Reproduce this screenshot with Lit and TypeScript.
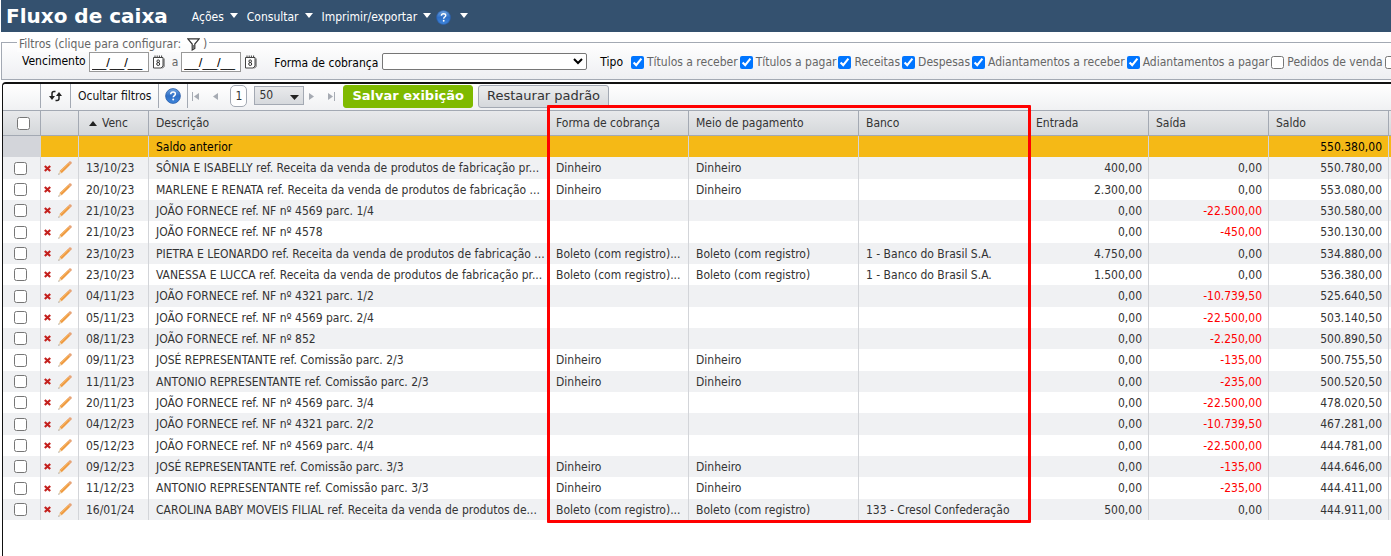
import { LitElement, html, css, svg } from "lit";
import { customElement } from "lit/decorators.js";
import { classMap } from "lit/directives/class-map.js";

interface Entry {
  date: string;
  text: string;
  method?: string;
  means?: string;
  bank?: string;
  credit: string;
  debit: string;
  balance: string;
}

const e = (
  date: string, text: string, credit: string, debit: string, balance: string,
  method = "", means = "", bank = ""
): Entry => ({ date, text, credit, debit, balance, method, means, bank });

const CASH = "Dinheiro";
const SLIP = "Boleto (com registro)";
const SLIP_CUT = "Boleto (com registro)...";

const ENTRIES: Entry[] = [
  e("13/10/23", "SÔNIA E ISABELLY ref. Receita da venda de produtos de fabricação pr...", "400,00", "0,00", "550.780,00", CASH, CASH),
  e("20/10/23", "MARLENE E RENATA ref. Receita da venda de produtos de fabricação ...", "2.300,00", "0,00", "553.080,00", CASH, CASH),
  e("21/10/23", "JOÃO FORNECE ref. NF nº 4569 parc. 1/4", "0,00", "-22.500,00", "530.580,00"),
  e("21/10/23", "JOÃO FORNECE ref. NF nº 4578", "0,00", "-450,00", "530.130,00"),
  e("23/10/23", "PIETRA E LEONARDO ref. Receita da venda de produtos de fabricação ...", "4.750,00", "0,00", "534.880,00", SLIP_CUT, SLIP, "1 - Banco do Brasil S.A."),
  e("23/10/23", "VANESSA E LUCCA ref. Receita da venda de produtos de fabricação pr...", "1.500,00", "0,00", "536.380,00", SLIP_CUT, SLIP, "1 - Banco do Brasil S.A."),
  e("04/11/23", "JOÃO FORNECE ref. NF nº 4321 parc. 1/2", "0,00", "-10.739,50", "525.640,50"),
  e("05/11/23", "JOÃO FORNECE ref. NF nº 4569 parc. 2/4", "0,00", "-22.500,00", "503.140,50"),
  e("08/11/23", "JOÃO FORNECE ref. NF nº 852", "0,00", "-2.250,00", "500.890,50"),
  e("09/11/23", "JOSÉ REPRESENTANTE ref. Comissão parc. 2/3", "0,00", "-135,00", "500.755,50", CASH, CASH),
  e("11/11/23", "ANTONIO REPRESENTANTE ref. Comissão parc. 2/3", "0,00", "-235,00", "500.520,50", CASH, CASH),
  e("20/11/23", "JOÃO FORNECE ref. NF nº 4569 parc. 3/4", "0,00", "-22.500,00", "478.020,50"),
  e("04/12/23", "JOÃO FORNECE ref. NF nº 4321 parc. 2/2", "0,00", "-10.739,50", "467.281,00"),
  e("05/12/23", "JOÃO FORNECE ref. NF nº 4569 parc. 4/4", "0,00", "-22.500,00", "444.781,00"),
  e("09/12/23", "JOSÉ REPRESENTANTE ref. Comissão parc. 3/3", "0,00", "-135,00", "444.646,00", CASH, CASH),
  e("11/12/23", "ANTONIO REPRESENTANTE ref. Comissão parc. 3/3", "0,00", "-235,00", "444.411,00", CASH, CASH),
  e("16/01/24", "CAROLINA BABY MOVEIS FILIAL ref. Receita da venda de produtos de...", "500,00", "0,00", "444.911,00", SLIP_CUT, SLIP, "133 - Cresol Confederação"),
];

const KINDS: [string, boolean][] = [
  ["Títulos a receber", true],
  ["Títulos a pagar", true],
  ["Receitas", true],
  ["Despesas", true],
  ["Adiantamentos a receber", true],
  ["Adiantamentos a pagar", true],
  ["Pedidos de venda", false],
];

const caret = html`<svg class="caret" width="8" height="5" viewBox="0 0 8 5"><path d="M0 0h8L4 5z" fill="#fff" /></svg>`;

const help = (size: number) => html`<svg width=${size} height=${size} viewBox="0 0 16 16">
  <defs>
    <linearGradient id="g" x1="0" y1="0" x2="0" y2="1">
      <stop offset="0" stop-color="#6fa3e0" /><stop offset=".5" stop-color="#2f6fc6" /><stop offset="1" stop-color="#3f86dc" />
    </linearGradient>
  </defs>
  <circle cx="8" cy="8" r="7.4" fill="url(#g)" stroke="#2a5da8" stroke-width=".8" />
  <path d="M5.7 6.2C5.8 4.7 6.8 4 8.1 4c1.4 0 2.3.8 2.3 1.9 0 1.6-2.2 1.7-2.2 3.4" fill="none" stroke="#fff" stroke-width="1.5" />
  <circle cx="8.2" cy="11.5" r="1" fill="#fff" />
</svg>`;

const calendar = html`<svg width="13" height="14" viewBox="0 0 13 14">
  <path d="M1.5 2.5h9.500v8.500l-2 2h-7.500z" fill="#fff" stroke="#444" />
  <path d="M12 3.500v8L10 13.500" fill="none" stroke="#444" />
  <path d="M3 .5v2M5.200.5v2M7.400.5v2M9.600.5v2" stroke="#444" />
  <circle cx="6.200" cy="6.200" r="1.300" fill="none" stroke="#333" /><circle cx="6.200" cy="9" r="1.500" fill="none" stroke="#333" />
</svg>`;

const remove = html`<svg width="7" height="7" viewBox="0 0 7 7"><path d="M.8 1l5.400 5M6.200 1L.8 6" stroke="#c4201d" stroke-width="2.200" /></svg>`;

const pencil = html`<svg width="14" height="14" viewBox="0 0 14 14">
  <path d="M1.600 10.100L10.200 1.700l2.100 2.100L3.700 12.300z" fill="#ee9a41" />
  <path d="M2.400 10.600L10.800 2.400" stroke="#f8b564" stroke-width="1" />
  <path d="M10.200 1.700L11.600.3q1-.3 1.700.4t.4 1.700L12.300 3.800z" fill="#e6a377" />
  <path d="M1.600 10.100L.4 13.500l3.300-1.200z" fill="#ecd3ae" /><path d="M.8 12.400L.4 13.600l1.200-.4z" fill="#444" />
</svg>`;

const COLUMNS = ["check", "tools", "date", "text", "method", "means", "bank", "money", "money", "money", "rest"];

@customElement("app-root")
export class AppRoot extends LitElement {
  static styles = css`
    :host {
      display: block;
      min-height: 100vh;
      background: #fff;
      color: #333;
      font: 12px/16px "DejaVu Sans Condensed", "Noto Sans", sans-serif;
      overflow: hidden;
    }
    * { box-sizing: border-box; }
    svg { display: block; flex: none; }
    button, input, select { font: inherit; color: inherit; margin: 0; }
    button { cursor: pointer; }
    .bar {
      display: flex;
      align-items: center;
      height: 32px;
      margin-left: 1px;
      padding-left: 5px;
      background: #34516f;
      color: #fff;
    }
    .title {
      margin: 0 24px 0 0;
      font: bold 20px/24px "DejaVu Sans", sans-serif;
    }
    .menu { display: flex; align-items: center; gap: 9px; padding-top: 2px; }
    .menu-item {
      display: flex;
      align-items: center;
      gap: 6px;
      padding: 0;
      border: 0;
      background: none;
    }
    .help { margin-left: -4px; }
    .caret { margin-bottom: 4px; }
    .filters {
      position: relative;
      display: flex;
      align-items: flex-start;
      height: 38px;
      margin: 10px 0 0 1px;
      padding: 9px 0 0 20px;
      border: 1px solid #a3a9b3;
      border-right: 0;
      background: linear-gradient(#fff, #eeeff2);
      color: #666;
      white-space: nowrap;
    }
    .legend {
      position: absolute;
      top: -7px;
      left: 15px;
      display: flex;
      align-items: center;
      padding: 0 2px;
      background: linear-gradient(#fff 50%, #fdfdfd 50%);
    }
    .funnel { margin: 0 3px 0 6px; padding: 0; border: 0; background: none; }
    .dates { display: flex; align-items: center; gap: 3px; }
    .name { color: #000; }
    .dates .name { padding-bottom: 2px; }
    .date-box {
      width: 60px;
      height: 20px;
      padding: 0 2px;
      border: 1px solid #999;
      background: #fff;
      color: #000;
      font: 13px/16px "Liberation Sans", sans-serif;
    }
    .plain { padding: 0; border: 0; background: none; }
    .to { margin: 0 0 0 4px; }
    .charge { display: flex; align-items: flex-start; gap: 4px; margin: 1px 13px 0 17px; }
    .charge .name { padding-top: 2px; }
    .charge select {
      width: 205px;
      height: 17px;
      border: 1px solid #767676;
      border-radius: 2px;
      background: #fff;
      color: #000;
    }
    .kinds { display: flex; align-items: center; margin-top: 2px; }
    .kinds .name { margin-right: 8px; }
    .kind { display: flex; align-items: center; gap: 3px; margin-right: 2px; }
    input[type="checkbox"] { width: 13px; height: 13px; flex: none; margin: 0; }
    .grid {
      position: relative;
      margin: 2px 0 0 2px;
      border: solid #111;
      border-width: 2px 0 0 1px;
      border-top-left-radius: 4px;
      min-height: calc(100vh - 82px);
    }
    .toolbar {
      display: flex;
      align-items: center;
      height: 26px;
      padding: 0 0 2px 37px;
      background: linear-gradient(#fff, #f0f1f3);
      border-top-left-radius: 3px;
      white-space: nowrap;
    }
    .tool {
      display: flex;
      align-items: center;
      height: 24px;
      padding: 0 7px;
      border: solid #a3a9b3;
      border-width: 0 0 0 1px;
      background: none;
      color: #111;
    }
    .tool-help { padding: 0 6px; }
    .pager {
      display: flex;
      align-items: center;
      gap: 11px;
      height: 24px;
      padding-left: 4px;
      border-left: 1px solid #a3a9b3;
    }
    .page {
      width: 17px;
      height: 22px;
      padding: 0;
      border: 1px solid #a3a9b3;
      border-radius: 5px;
      background: #fff;
      text-align: center;
    }
    .size { position: relative; display: flex; margin: 0 -7px 2px -4px; }
    .size select {
      appearance: none;
      width: 50px;
      height: 19px;
      padding: 0 4px;
      border: 1px solid #a3a9b3;
      border-radius: 0;
      background: linear-gradient(#e9eaec, #d6d9dd);
    }
    .size svg { position: absolute; right: 5px; top: 9px; pointer-events: none; }
    .action {
      height: 23px;
      padding: 0 8px;
      border: 1px solid #a3a9b3;
      border-radius: 3px;
      background: linear-gradient(#eceded, #d5d8dc);
      font-size: 13px;
      font-family: "DejaVu Sans", sans-serif;
    }
    .save {
      margin: 0 5px 0 8px;
      border-color: #7fba00;
      background: #7fba00;
      color: #fff;
      font-weight: bold;
    }
    table { width: 100%; border-collapse: separate; border-spacing: 0; table-layout: fixed; }
    th, td {
      height: 21px;
      padding: 0 6px 0 7px;
      border-right: 1px solid #d3d5d9;
      font-weight: normal;
      text-align: left;
      line-height: 16px;
      white-space: nowrap;
      overflow: hidden;
    }
    th {
      height: 26px;
      border: solid #a3a9b3;
      border-width: 1px 1px 1px 0;
      background: linear-gradient(#e8e9eb, #d4d7da);
    }
    th:last-child, td:last-child { border-right: 0; }
    .check { width: 38px; }
    .tools { width: 38px; }
    .date { width: 70px; }
    .text { width: 400px; }
    .method { width: 140px; }
    .means, .bank { width: 170px; }
    .money { width: 120px; }
    .pick { padding: 0 0 0 11px; }
    th.pick { padding-left: 14px; }
    .pick input { display: block; }
    .sort { display: flex; align-items: center; gap: 5px; padding-left: 3px; }
    .opening td { background: #f5b916; color: #000; }
    .opening .pick { background: #d3d5da; }
    .entry:nth-child(3n + 2) td { height: 22px; }
    .entry:nth-child(even) td { background: #f0f1f3; }
    .tools-cell { padding: 0 0 0 3px; }
    .actions { display: flex; align-items: center; gap: 7px; }
    .actions button { padding: 0; border: 0; background: none; }
    .num { text-align: right; }
    .negative { color: #f00; }
    .mark {
      position: absolute;
      top: 21px;
      left: 544px;
      width: 484px;
      height: 418px;
      border: 3px solid #f00;
      border-radius: 1px;
      pointer-events: none;
    }
  `;

  private arrow(points: string, bar?: number) {
    return html`<svg width="8" height="9" viewBox="0 0 8 9">
      <path d=${points} fill="#a6abb3" />
      ${bar === undefined ? "" : svg`<rect x=${bar} y="0" width="1" height="9" fill="#a6abb3" />`}
    </svg>`;
  }

  private row(r: Entry) {
    return html`<tr class="entry">
      <td class="pick"><input type="checkbox" aria-label=${r.text} /></td>
      <td class="tools-cell"><div class="actions">
        <button aria-label="Excluir">${remove}</button><button aria-label="Editar">${pencil}</button>
      </div></td>
      <td>${r.date}</td>
      <td>${r.text}</td>
      <td>${r.method}</td>
      <td>${r.means}</td>
      <td>${r.bank}</td>
      <td class="num">${r.credit}</td>
      <td class=${classMap({ num: true, negative: r.debit.startsWith("-") })}>${r.debit}</td>
      <td class="num">${r.balance}</td>
      <td></td>
    </tr>`;
  }

  render() {
    return html`
      <header class="bar">
        <h1 class="title">Fluxo de caixa</h1>
        <nav class="menu">
          ${["Ações", "Consultar", "Imprimir/exportar"].map(
            (m) => html`<button class="menu-item">${m}${caret}</button>`
          )}
          <button class="menu-item help" aria-label="Ajuda">${help(15)}</button>
          <button class="menu-item" aria-label="Mais">${caret}</button>
        </nav>
      </header>

      <section class="filters">
        <div class="legend">
          Filtros (clique para configurar:
          <button class="funnel" aria-label="Configurar">
            <svg width="13" height="13" viewBox="0 0 13 13">
              <path d="M.8 .8h11.400L7.800 6v4.500L5.200 12V6z" fill="#fff" stroke="#333" stroke-width="1.200" />
              <path d="M6.500 7v4" stroke="#777" />
            </svg>
          </button>)
        </div>
        <div class="dates">
          <label class="name" for="from">Vencimento</label>
          <input class="date-box" id="from" value="__/__/__" />
          <button class="plain" aria-label="Calendário">${calendar}</button>
          <label class="to" for="until">a</label>
          <input class="date-box" id="until" value="__/__/__" />
          <button class="plain" aria-label="Calendário">${calendar}</button>
        </div>
        <div class="charge">
          <label class="name" for="charge">Forma de cobrança</label>
          <select id="charge"><option></option></select>
        </div>
        <div class="kinds">
          <span class="name">Tipo</span>
          ${KINDS.map(
            ([label, on]) => html`<label class="kind"><input type="checkbox" .checked=${on} />${label}</label>`
          )}
          <input type="checkbox" aria-label="Pedidos de compra" />
        </div>
      </section>

      <main class="grid">
        <div class="toolbar">
          <button class="tool" aria-label="Atualizar">
            <svg width="15" height="12" viewBox="0 0 15 12">
              <path d="M7.500 1.500H6Q4 1.500 4 3.500V7" fill="none" stroke="#222" stroke-width="1.500" />
              <path d="M1 6h6L4 10z" fill="#222" />
              <path d="M7.500 10.500H9Q11 10.500 11 8.500V5" fill="none" stroke="#222" stroke-width="1.500" />
              <path d="M8 6h6L11 2z" fill="#222" />
            </svg>
          </button>
          <button class="tool">Ocultar filtros</button>
          <button class="tool tool-help" aria-label="Ajuda">${help(16)}</button>
          <div class="pager">
            <button class="plain" aria-label="Primeira">${this.arrow("M7 1v7L2 4.500z", 0)}</button>
            <button class="plain" aria-label="Anterior">${this.arrow("M7 1v7L2 4.500z")}</button>
            <button class="page">1</button>
            <span class="size">
              <select aria-label="Linhas por página"><option>50</option></select>
              <svg width="9" height="5" viewBox="0 0 9 5"><path d="M0 0h9L4.500 5z" fill="#222" /></svg>
            </span>
            <button class="plain" aria-label="Próxima">${this.arrow("M1 1v7l5-3.500z")}</button>
            <button class="plain" aria-label="Última">${this.arrow("M1 1v7l5-3.500z", 7)}</button>
          </div>
          <button class="action save">Salvar exibição</button>
          <button class="action">Restaurar padrão</button>
        </div>

        <table>
          <colgroup>${COLUMNS.map((c) => html`<col class=${c} />`)}</colgroup>
          <thead>
            <tr>
              <th class="pick"><input type="checkbox" aria-label="Selecionar todos" /></th>
              <th></th>
              <th><span class="sort"><svg width="8" height="5" viewBox="0 0 8 5"><path d="M0 5h8L4 0z" fill="#222" /></svg>Venc</span></th>
              ${["Descrição", "Forma de cobrança", "Meio de pagamento", "Banco", "Entrada", "Saída", "Saldo"].map(
                (h) => html`<th>${h}</th>`
              )}
              <th></th>
            </tr>
          </thead>
          <tbody>
            <tr class="opening">
              <td class="pick"></td><td></td><td></td><td>Saldo anterior</td>
              <td></td><td></td><td></td><td></td><td></td>
              <td class="num">550.380,00</td><td></td>
            </tr>
            ${ENTRIES.map((r) => this.row(r))}
          </tbody>
        </table>
        <div class="mark"></div>
      </main>
    `;
  }
}
